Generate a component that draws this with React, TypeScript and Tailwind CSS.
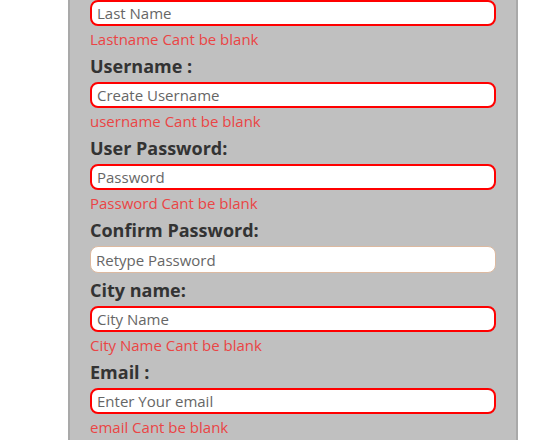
import React from 'react'

// Sign-up form panel — each field has a label, an input and an optional error line.

type Field = {
    label?: string
    placeholder: string
    error?: string
    ok?: boolean
}

const fields: Field[] = [
    { placeholder: 'Last Name', error: 'Lastname Cant be blank' },
    { label: 'Username :', placeholder: 'Create Username', error: 'username Cant be blank' },
    { label: 'User Password:', placeholder: 'Password', error: 'Password Cant be blank' },
    { label: 'Confirm Password:', placeholder: 'Retype Password', ok: true },
    { label: 'City name:', placeholder: 'City Name', error: 'City Name Cant be blank' },
    { label: 'Email :', placeholder: 'Enter Your email', error: 'email Cant be blank' },
]

export default function App() {
    return (
        <div
            className="w-[557px] h-[440px] overflow-hidden bg-white"
            style={{ fontFamily: '"Open Sans", "Noto Sans", sans-serif' }}
        >
            <div className="ml-[68px] w-[450px] h-full bg-[#c0c0c0] border-x-2 border-[#a9a9a9] px-[20px]">
                {fields.map((f) => (
                    <div key={f.placeholder}>
                        {f.label && (
                            <div className="mt-[6px] mb-[4px] h-[24px] leading-[24px] text-[18px] font-bold text-[#333333]">
                                {f.label}
                            </div>
                        )}
                        <input
                            placeholder={f.placeholder}
                            className={
                                'block w-full rounded-[8px] bg-white px-[5px] text-[15px] text-[#333] placeholder:text-[#666666] outline-none ' +
                                (f.ok
                                    ? 'h-[27px] border border-[#dcb9a0] mb-[-1px]'
                                    : 'h-[26px] border-2 border-[#ff0000]')
                            }
                        />
                        {f.error && (
                            <div className="h-[22px] leading-[26px] text-[15px] text-[#ea4545]">
                                {f.error}
                            </div>
                        )}
                    </div>
                ))}
            </div>
        </div>
    )
}
